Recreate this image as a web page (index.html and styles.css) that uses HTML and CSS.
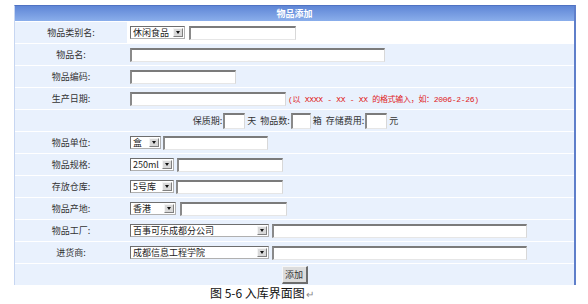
FILE: index.html
```html
<!DOCTYPE html>
<html>
<head>
<meta charset="utf-8">
<link rel="stylesheet" href="styles.css">
</head>
<body>
<div class="page">
  <div class="frame">
    <div class="head">物品添加</div>
    <div class="row">
      <div class="lab">物品类别名:</div>
      <div class="val white"><span class="sel w55"><span class="st">休闲食品</span><span class="arr"></span></span><span class="inp w107"></span></div>
    </div>
    <div class="row">
      <div class="lab">物品名:</div>
      <div class="val"><span class="inp w255"></span></div>
    </div>
    <div class="row">
      <div class="lab">物品编码:</div>
      <div class="val"><span class="inp w106"></span></div>
    </div>
    <div class="row">
      <div class="lab">生产日期:</div>
      <div class="val"><span class="inp w156"></span><span class="hint">(以 XXXX - XX - XX 的格式输入，如：2006-2-26)</span></div>
    </div>
    <div class="row">
      <div class="span">
        <span class="t">保质期:</span><span class="inp small w22"></span><span class="t u">天</span>
        <span class="t g">物品数:</span><span class="inp small w20"></span><span class="t u">箱</span>
        <span class="t g">存储费用:</span><span class="inp small w22"></span><span class="t u">元</span>
      </div>
    </div>
    <div class="row">
      <div class="lab">物品单位:</div>
      <div class="val"><span class="sel w31"><span class="st">盒</span><span class="arr"></span></span><span class="inp w105 g2"></span></div>
    </div>
    <div class="row">
      <div class="lab">物品规格:</div>
      <div class="val"><span class="sel w44"><span class="st">250ml</span><span class="arr"></span></span><span class="inp w106 g3"></span></div>
    </div>
    <div class="row">
      <div class="lab">存放仓库:</div>
      <div class="val"><span class="sel w44"><span class="st">5号库</span><span class="arr"></span></span><span class="inp w107 g2"></span></div>
    </div>
    <div class="row">
      <div class="lab">物品产地:</div>
      <div class="val"><span class="sel w46"><span class="st">香港</span><span class="arr"></span></span><span class="inp w107"></span></div>
    </div>
    <div class="row">
      <div class="lab">物品工厂:</div>
      <div class="val"><span class="sel w139"><span class="st">百事可乐成都分公司</span><span class="arr"></span></span><span class="inp w255 g3"></span></div>
    </div>
    <div class="row">
      <div class="lab">进货商:</div>
      <div class="val"><span class="sel w139"><span class="st">成都信息工程学院</span><span class="arr"></span></span><span class="inp w255 g3"></span></div>
    </div>
    <div class="row last">
      <div class="span"><span class="btn">添加</span></div>
    </div>
  </div>
  <div class="caption">图 5-6 入库界面图<span class="pm">↵</span></div>
</div>
</body>
</html>
```

FILE: styles.css
```css
html, body {
  margin: 0;
  padding: 0;
  background: #ffffff;
}
body {
  font-family: "Noto Sans CJK SC", "DejaVu Sans", sans-serif;
  font-size: 9px;
  color: #333333;
}
.page {
  padding: 5px 0 0 14px;
  width: 588px;
  box-sizing: border-box;
}
.frame {
  width: 562px;
  border-top: 1px solid #4f72c2;
  border-left: 1px solid #c7d6f1;
  border-right: 2px solid #5f7fca;
  box-sizing: border-box;
  background: #ffffff;
}
.head {
  height: 15px;
  line-height: 15px;
  text-align: center;
  color: #ffffff;
  font-weight: bold;
  background: linear-gradient(#5f86d6, #8aaeeb);
  border-bottom: 1px solid #ffffff;
}
.row {
  display: grid;
  grid-template-columns: 112px 1fr;
  height: 22px;
  box-sizing: border-box;
  border-bottom: 1px solid #ffffff;
}
.row.last {
  height: 21px;
  border-bottom: none;
}
.lab {
  background: #e9f1fd;
  display: flex;
  align-items: center;
  justify-content: center;
  color: #333;
}
.val {
  background: #e9f1fd;
  display: flex;
  align-items: center;
  padding-left: 3px;
}
.val.white {
  background: #ffffff;
}
.span {
  grid-column: 1 / 3;
  background: #e9f1fd;
  display: flex;
  align-items: center;
  justify-content: center;
  padding-left: 2px;
}
.inp {
  display: inline-block;
  height: 14px;
  box-sizing: border-box;
  background: #ffffff;
  border-top: 2px solid #7b7b7b;
  border-left: 2px solid #8a8a8a;
  border-right: 1px solid #d8d8d8;
  border-bottom: 1px solid #e6e6e6;
}
.inp.small {
  height: 16px;
}
.w20 { width: 20px; }
.w22 { width: 22px; }
.w105 { width: 105px; }
.w106 { width: 106px; }
.w107 { width: 107px; }
.w156 { width: 156px; }
.w255 { width: 255px; }
.w31 { width: 31px; }
.w44 { width: 44px; }
.w46 { width: 46px; }
.w55 { width: 55px; }
.w139 { width: 139px; }
.sel {
  display: inline-flex;
  align-items: center;
  justify-content: space-between;
  height: 13px;
  box-sizing: border-box;
  border: 1px solid #6e6e6e;
  border-right-color: #b0b0b0;
  border-bottom-color: #b0b0b0;
  background: #ffffff;
  margin-right: 4px;
  padding: 0 1px 0 2px;
}
.st {
  color: #222;
  line-height: 11px;
  white-space: nowrap;
  overflow: hidden;
}
.arr {
  position: relative;
  flex: none;
  width: 10px;
  height: 9px;
  box-sizing: border-box;
  background: #d9d9d9;
  border: 1px solid #f4f4f4;
  border-right-color: #808080;
  border-bottom-color: #808080;
}
.arr::after {
  content: "";
  position: absolute;
  left: 2px;
  top: 2px;
  border-left: 2px solid transparent;
  border-right: 2px solid transparent;
  border-top: 3px solid #111;
}
.g2 { margin-left: -2px; }
.g3 { margin-left: -1px; }
.hint {
  color: #e0201a;
  font-family: "Liberation Mono", "Noto Sans CJK SC", monospace;
  font-size: 8px;
  letter-spacing: -0.3px;
  margin-left: 2px;
  white-space: nowrap;
}
.t {
  white-space: nowrap;
  color: #333;
}
.t.u {
  margin-left: 2px;
}
.t.g {
  margin-left: 4px;
}
.span .inp.small {
  margin-left: 1px;
}
.btn {
  display: inline-flex;
  align-items: center;
  justify-content: center;
  width: 26px;
  height: 18px;
  box-sizing: border-box;
  background: #dcdcdc;
  border: 1px solid #f6f6f6;
  border-right: 2px solid #6d6d6d;
  border-bottom: 2px solid #6d6d6d;
  color: #333;
  margin-left: -2px;
}
.caption {
  margin: 1px 0 0 196px;
  font-size: 12px;
  line-height: 14px;
  color: #111;
  font-family: "Noto Sans CJK SC", sans-serif;
}
.pm {
  color: #888;
  font-size: 10px;
  margin-left: 1px;
}
```
